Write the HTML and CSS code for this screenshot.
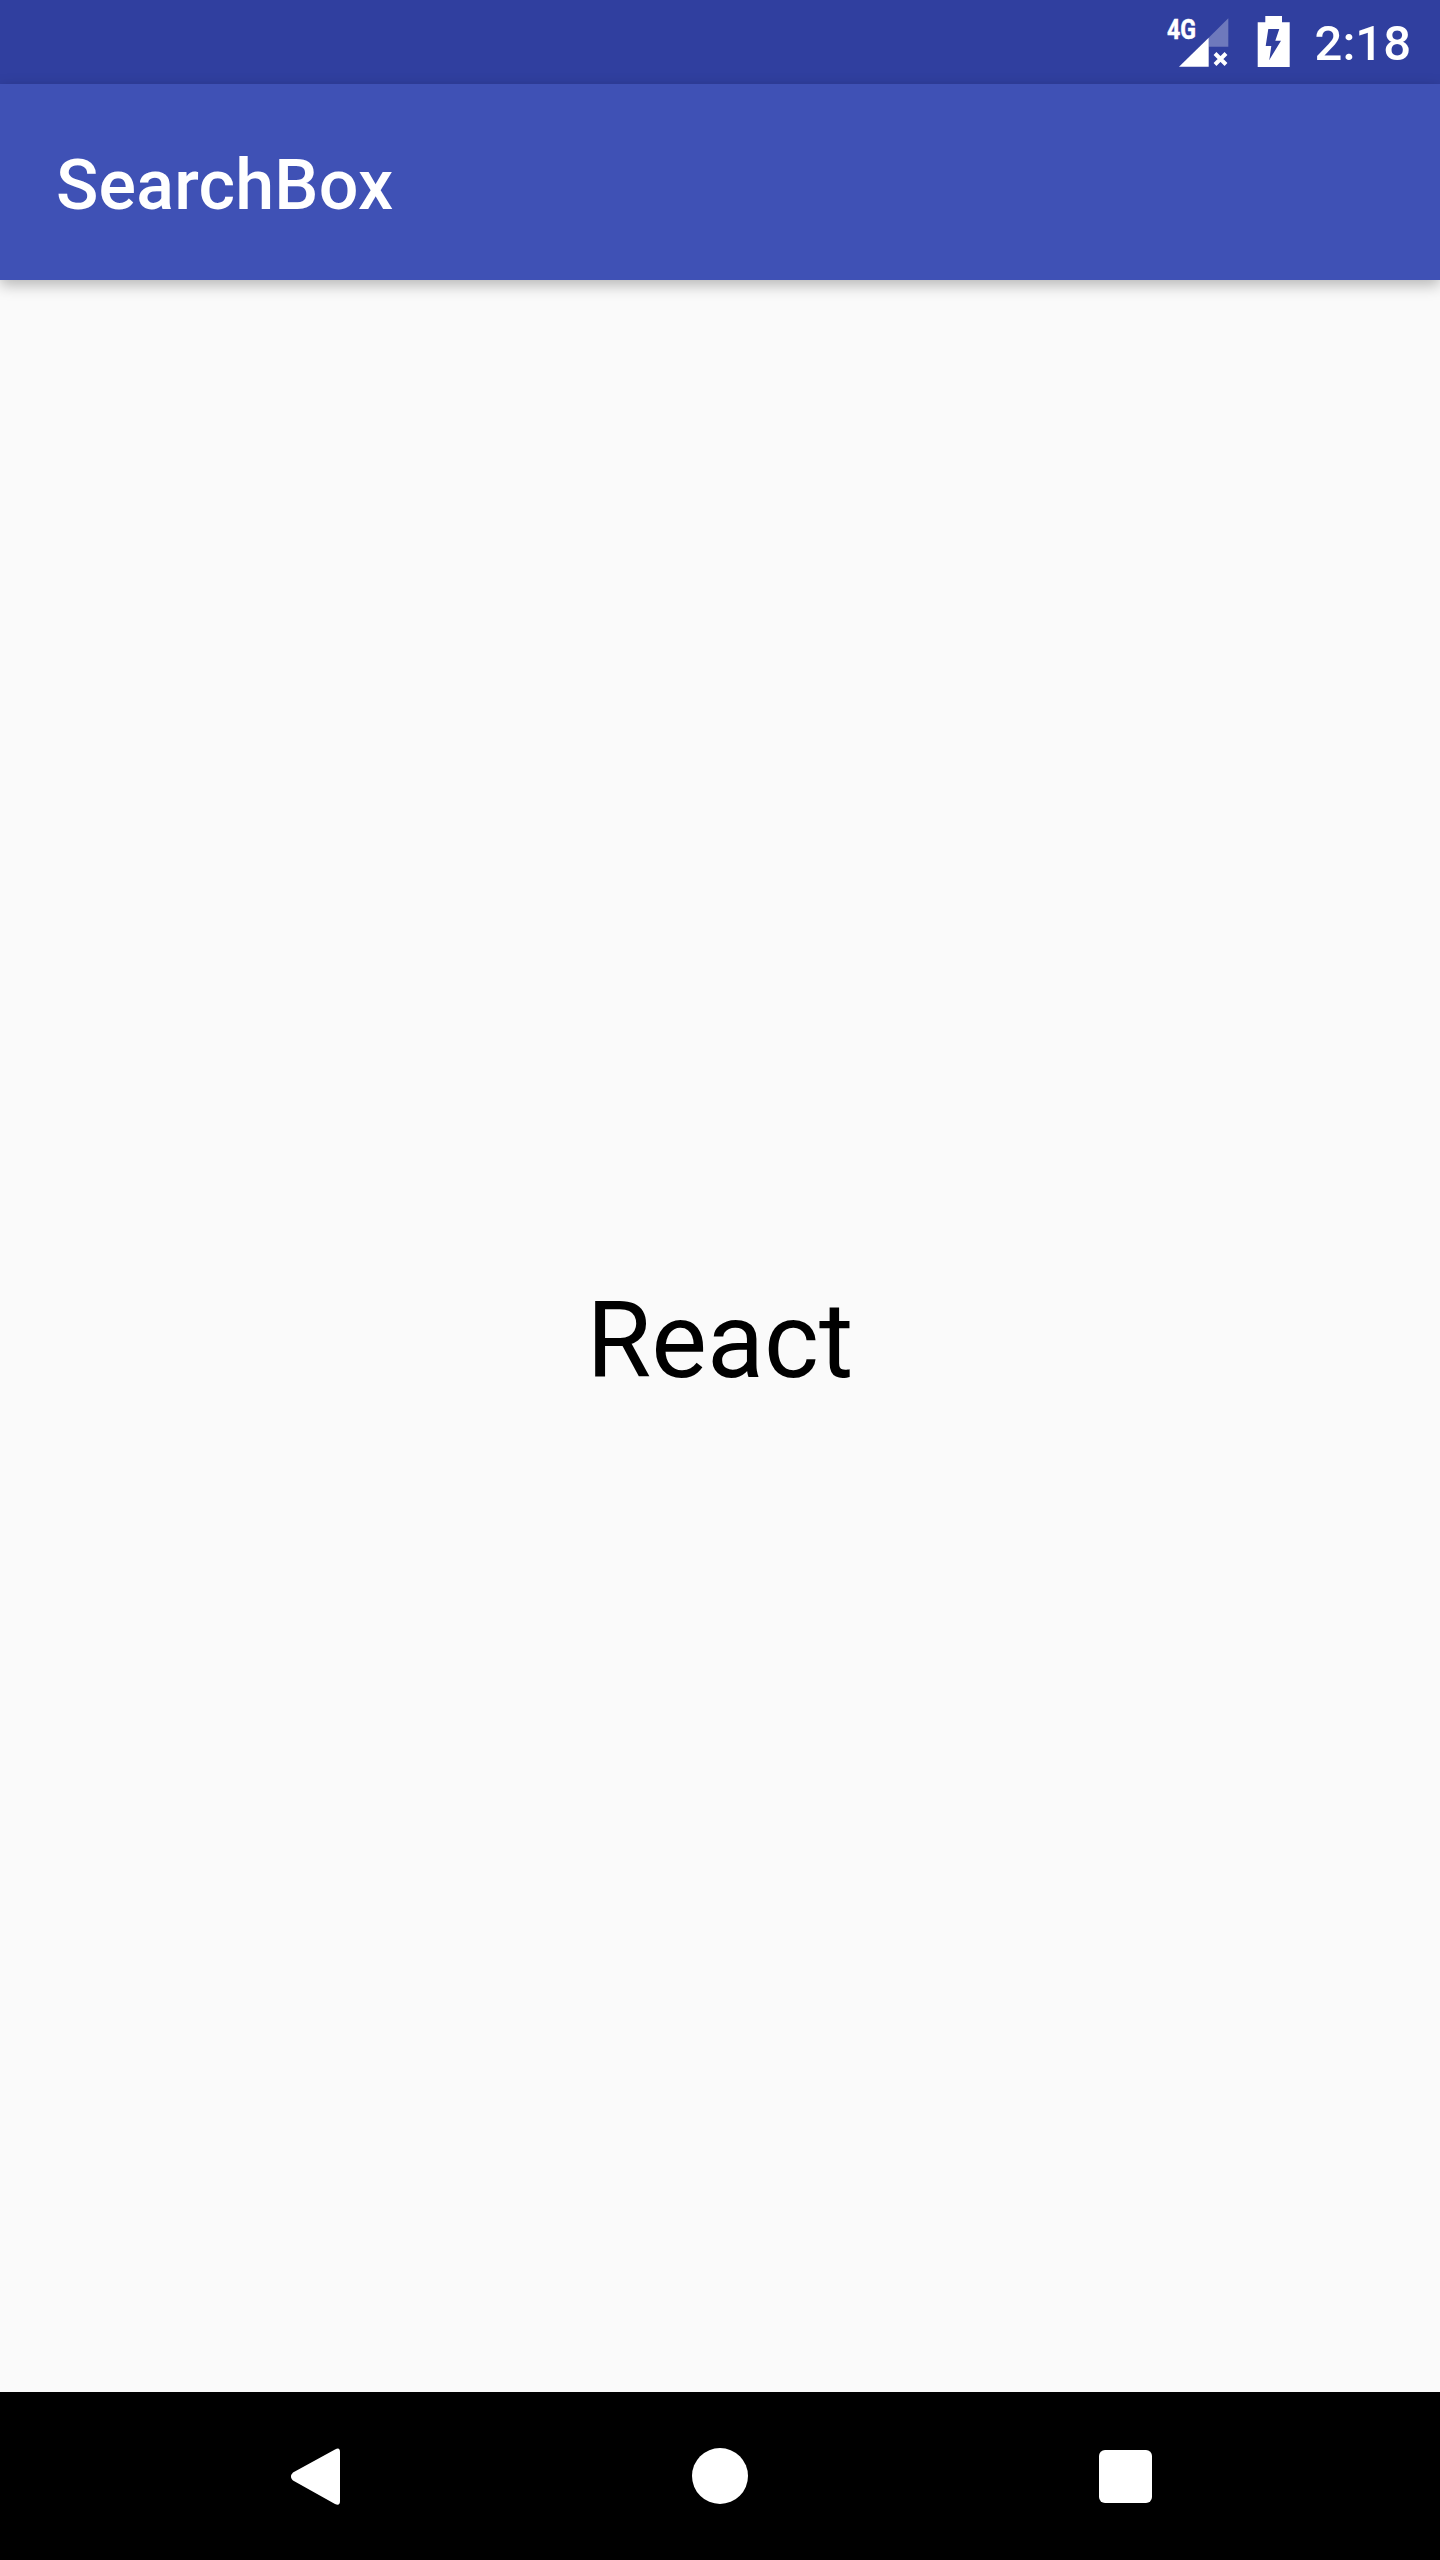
FILE: index.html

```html
<!DOCTYPE html>
<html>

<head>
<title>SearchBox</title>
<meta charset="UTF-8">
<link rel="stylesheet" href="styles.css">
</head>

<body>
  <div class="screen">
    <div class="status-bar">
      <svg class="signal-icon" width="64" height="56" viewBox="0 0 64 56">
        <text class="net-label" x="1" y="25" textLength="29" lengthAdjust="spacingAndGlyphs">4G</text>
        <polygon class="signal-off" points="42.7,23.7 62.3,4.3 62.3,32.7 42.7,32.7"/>
        <polygon class="signal-on" points="13,52.7 42.7,23.7 42.7,52.7"/>
        <path class="signal-x" d="M49 39.5l11 11M60 39.5l-11 11"/>
      </svg>
      <svg class="battery-icon" width="34" height="52" viewBox="0 0 34 52">
        <path class="battery-body" fill-rule="evenodd" d="M8.3 0H25V6.3H32.7V51H.7V6.3H8.3ZM11.3 13L8.7 30H14.3L12.3 44L24 24.7H18.3L22.3 13Z"/>
      </svg>
      <span class="clock">2:18</span>
    </div>

    <div class="app-bar">
      <span class="app-title">SearchBox</span>
    </div>

    <div class="content">
      <span class="big-text">React</span>
    </div>

    <div class="nav-bar">
      <div class="nav-btn">
        <svg width="70" height="70" viewBox="0 0 70 70">
          <path class="nav-shape" d="M55 8.5 Q60 5.5 60 11 V60 Q60 65.5 55 63 L13 39.5 Q9 35.5 13 31.5 Z"/>
        </svg>
      </div>
      <div class="nav-btn"><div class="home-circle"></div></div>
      <div class="nav-btn"><div class="recent-square"></div></div>
    </div>
  </div>
</body>
</html>
```

FILE: styles.css

```css
html, body {
  margin: 0px;
  padding: 0px;
  background-color: #fafafa;
  font-family: Roboto, "Liberation Sans", sans-serif;
}

.screen {
  display: flex;
  flex-direction: column;
  width: 1440px;
  height: 2560px;
  overflow: hidden;
}

.status-bar {
  display: flex;
  align-items: center;
  justify-content: flex-end;
  flex: 0 0 84px;
  padding-right: 29px;
  background: #303f9f;
  color: #fff;
}

.signal-icon {
  display: block;
  margin-right: 27px;
}

.net-label {
  font-family: Roboto, sans-serif;
  font-size: 28px;
  font-weight: 700;
  fill: #fff;
  stroke: #fff;
  stroke-width: 0.5;
}

.signal-on { fill: #fff; }
.signal-off { fill: #fff; fill-opacity: 0.3; }

.signal-x {
  fill: none;
  stroke: #fff;
  stroke-width: 4;
}

.battery-icon {
  display: block;
  margin-right: 24px;
}

.battery-body { fill: #fff; }

.clock {
  padding-top: 2px;
  font-size: 49px;
  font-weight: 500;
}

.app-bar {
  position: relative;
  z-index: 1;
  display: flex;
  align-items: center;
  flex: 0 0 196px;
  box-sizing: border-box;
  padding: 6px 0 0 56px;
  background: #3f51b5;
  box-shadow: 0 5px 14px rgba(0,0,0,0.28);
}

.app-title {
  color: #fff;
  font-size: 70px;
  font-weight: 500;
  letter-spacing: 0.2px;
}

.content {
  display: flex;
  align-items: center;
  justify-content: center;
  flex: 1;
  padding-top: 10px;
}

.big-text {
  color: #000;
  font-size: 105px;
}

.nav-bar {
  display: grid;
  grid-template-columns: repeat(3, 405px);
  flex: 0 0 168px;
  padding: 0 112.5px;
  background: #000;
}

.nav-btn {
  display: flex;
  align-items: center;
  justify-content: center;
}

.nav-shape { fill: #fff; }

.home-circle {
  width: 56px;
  height: 56px;
  border-radius: 50%;
  background: #fff;
}

.recent-square {
  width: 53px;
  height: 53px;
  border-radius: 6px;
  background: #fff;
}
```
